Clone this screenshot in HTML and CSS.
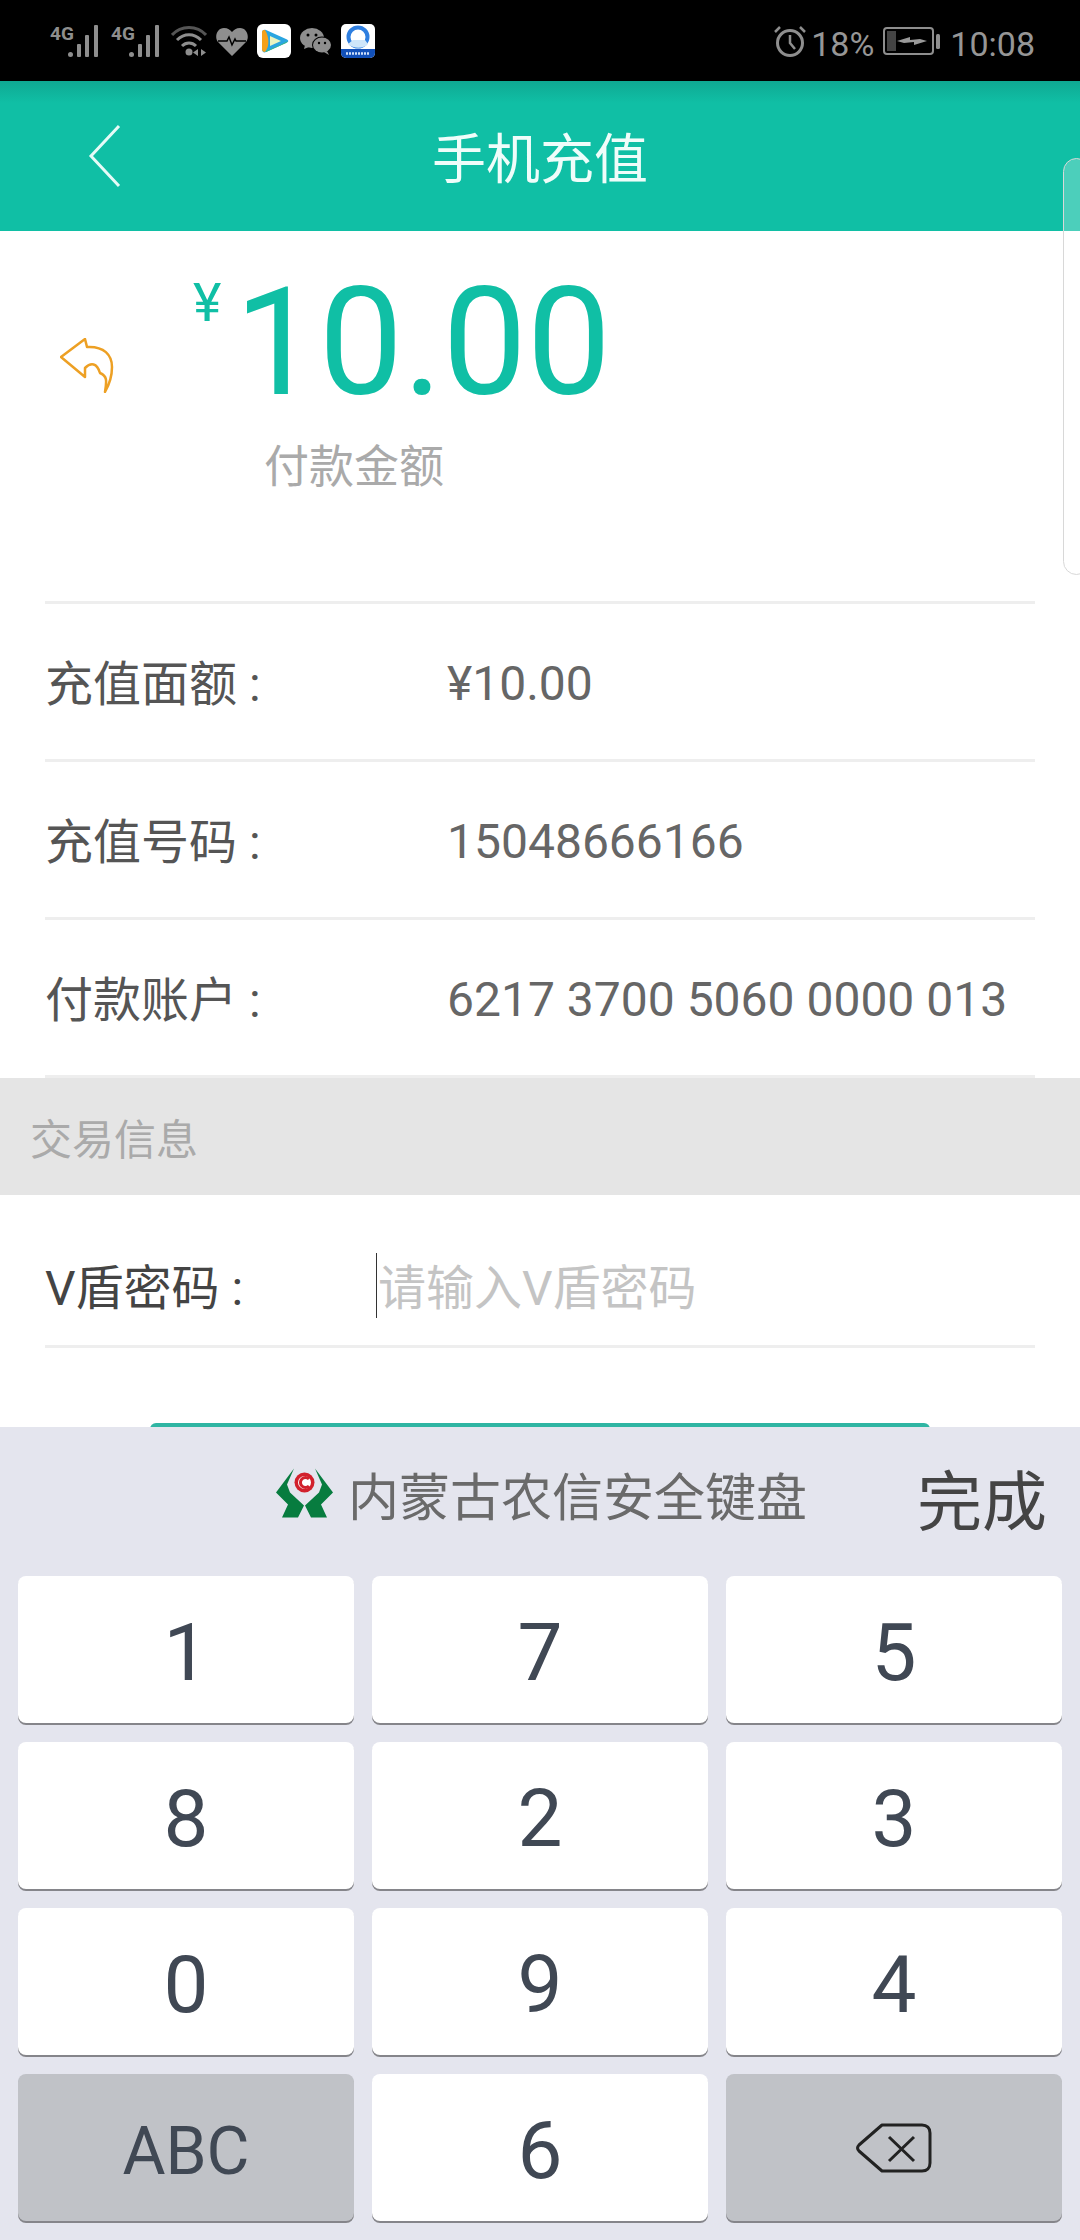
FILE: index.html
```html
<!DOCTYPE html>
<html lang="zh-CN">
<head>
    <meta charset="UTF-8">
    <meta name="viewport" content="width=device-width, initial-scale=1.0">
    <title>手机充值</title>
    <link rel="stylesheet" href="styles.css">
</head>
<body>

<div class="screen">
    <div class="status-bar">
        <div class="status-left">
            <span class="net">4G</span>
            <svg class="bars" viewBox="0 0 32 32"><g fill="#8e8e8e"><circle cx="2.5" cy="29.5" r="2.5"/><rect x="9" y="19" width="4" height="13" rx="1"/><rect x="17" y="10" width="4" height="22" rx="1"/><rect x="26" y="0" width="4" height="32" rx="1"/></g></svg>
            <span class="net net-2">4G</span>
            <svg class="bars" viewBox="0 0 32 32"><g fill="#8e8e8e"><circle cx="2.5" cy="29.5" r="2.5"/><rect x="9" y="19" width="4" height="13" rx="1"/><rect x="17" y="10" width="4" height="22" rx="1"/><rect x="26" y="0" width="4" height="32" rx="1"/></g></svg>
            <svg class="wifi" viewBox="0 0 36 30"><g fill="none" stroke-width="3"><path d="M1 9C10 -1 26 -1 35 9" stroke="#555"/><path d="M6 14C13 7 23 7 30 14" stroke="#8e8e8e"/><path d="M11 20C15 16 21 16 25 20" stroke="#8e8e8e"/></g><circle cx="18" cy="26" r="3.5" fill="#8e8e8e"/><path d="M27 23v7l-5-3.500zM30 23l5 3.500-5 3.500z" fill="#8e8e8e"/></svg>
            <svg class="heart" viewBox="0 0 32 28"><path d="M16 28L2 14C-2 9 1 0 8 0c4 0 6 2 8 4 2-2 4-4 8-4 7 0 10 9 6 14z" fill="#8e8e8e"/><path d="M2 13h9l2-4 3 8 3-6 1 2h10" fill="none" stroke="#000" stroke-width="1.500"/></svg>
            <svg class="tile" viewBox="0 0 34 34"><rect width="34" height="34" rx="6" fill="#fff"/><path d="M5 9C5 6 7 5 9 6L29 15C32 16 32 18 29 19L9 28C7 29 5 28 5 25z" fill="#2aa5e0"/><path d="M5 9C5 6 6 6 8 6C12 12 13 22 8 28C6 28 5 27 5 25z" fill="#f6a01a"/><path d="M9 27C14 25 24 21 31 17L29 19 9 28z" fill="#3dbb6c"/><path d="M13 12L24 17 13 22z" fill="#eaf4c0"/></svg>
            <svg class="wechat" viewBox="0 0 32 28"><ellipse cx="12" cy="10" rx="12" ry="10" fill="#8e8e8e"/><ellipse cx="22" cy="17" rx="10" ry="8.500" fill="#000"/><ellipse cx="22" cy="17" rx="9" ry="7.500" fill="#8e8e8e"/><path d="M27 23l2 4-5-3zM5 17l-1 4 5-2z" fill="#8e8e8e"/><circle cx="8" cy="7" r="1.500" fill="#000"/><circle cx="16" cy="7" r="1.500" fill="#000"/><circle cx="19" cy="15" r="1.200" fill="#000"/><circle cx="25" cy="15" r="1.200" fill="#000"/></svg>
            <svg class="tile" viewBox="0 0 34 34"><rect width="34" height="34" rx="5" fill="#fff"/><path d="M0 25h34v4a5 5 0 0 1-5 5H5a5 5 0 0 1-5-5z" fill="#1250b8"/><circle cx="17" cy="13" r="9.500" fill="none" stroke="#2f7fe0" stroke-width="4"/><path d="M7 20C12 25 23 25 27 20L24 16H12z" fill="#cfe6fa"/><path d="M5 29.500h24" stroke="#cfe0fa" stroke-width="2.500" stroke-dasharray="2 1"/></svg>
        </div>
        <div class="status-right">
            <svg class="alarm" viewBox="0 0 32 32"><circle cx="16" cy="18" r="12.500" fill="none" stroke="#8e8e8e" stroke-width="3"/><path d="M16 10v8l5 6" fill="none" stroke="#8e8e8e" stroke-width="2.500"/><path d="M1 7L6 2M31 7L26 2" stroke="#8e8e8e" stroke-width="2.500"/></svg>
            <span class="pct">18%</span>
            <svg class="battery" viewBox="0 0 57 28"><rect x="1" y="1" width="49" height="26" rx="3" fill="none" stroke="#8e8e8e" stroke-width="2"/><rect x="4" y="4" width="9" height="20" fill="#444"/><path d="M14 14l13-4v3l10-1 7 2-13 4v-3l-10 1z" fill="#999"/><rect x="53" y="7" width="4" height="15" rx="1.500" fill="#8e8e8e"/></svg>
            <span class="clock">10:08</span>
        </div>
    </div>

    <div class="nav-bar">
        <svg class="nav-back" viewBox="0 0 34 64"><path d="M31 2L3 32l28 30" fill="none" stroke="#e6fbf7" stroke-width="3"/></svg>
        <h1 class="nav-title">手机充值</h1>
    </div>

    <div class="hero">
        <svg class="undo-icon" viewBox="0 0 54 55"><path d="M1 19L25 1 27 9C44 8 52 17 52 29 52 38 49 47 45 54 47 42 47 38 40 35 37 25 31 24 25 30L25 39z" fill="none" stroke="#eda024" stroke-width="2.500" stroke-linejoin="round"/></svg>
        <div class="amount-box">
            <div class="amount-line">
                <span class="yen">¥</span>
                <span class="amount">10.00</span>
            </div>
            <div class="amount-label">付款金额</div>
        </div>
    </div>

    <div class="info-list">
        <div class="info-row">
            <span class="info-name">充值面额 :</span>
            <span class="info-value">¥10.00</span>
        </div>
        <div class="info-row">
            <span class="info-name">充值号码 :</span>
            <span class="info-value">15048666166</span>
        </div>
        <div class="info-row">
            <span class="info-name">付款账户 :</span>
            <span class="info-value">6217 3700 5060 0000 013</span>
        </div>
    </div>

    <div class="section-title">交易信息</div>

    <div class="input-row">
        <span class="input-name">V盾密码 :</span>
        <span class="caret"></span>
        <span class="placeholder">请输入V盾密码</span>
    </div>

    <div class="submit-btn"></div>

    <div class="side-sheet"></div>

    <div class="keyboard">
        <div class="kb-top">
            <div class="kb-brand">
                <svg class="kb-logo" viewBox="0 0 57 52">
                    <path d="M18 1L0 25 12 37 6 50H22L28 38 14 25 11 17z" fill="#077c3f"/>
                    <path d="M39 1L57 25 45 37 51 50H35L29 38 43 25 46 17z" fill="#077c3f"/>
                    <circle cx="28.500" cy="15" r="10" fill="#d2202c"/>
                    <circle cx="28.500" cy="15" r="6.500" fill="#fff"/>
                    <path d="M33 11.500A5 5 0 1 0 33 18.500" fill="none" stroke="#d2202c" stroke-width="3"/>
                </svg>
                <span class="kb-name">内蒙古农信安全键盘</span>
            </div>
            <span class="kb-done">完成</span>
        </div>
        <div class="kb-grid">
            <div class="key">1</div>
            <div class="key">7</div>
            <div class="key">5</div>
            <div class="key">8</div>
            <div class="key">2</div>
            <div class="key">3</div>
            <div class="key">0</div>
            <div class="key">9</div>
            <div class="key">4</div>
            <div class="key key-fn key-abc">ABC</div>
            <div class="key">6</div>
            <div class="key key-fn">
                <svg class="del-icon" viewBox="0 0 76 50"><path d="M26 2H66C71 2 74 5 74 10V40C74 45 71 48 66 48H26L3 28C1 26 1 24 3 22z" fill="none" stroke="#222" stroke-width="3" stroke-linejoin="round"/><path d="M33 14L58 38M58 14L33 38" stroke="#222" stroke-width="3"/></svg>
            </div>
        </div>
    </div>
</div>

</body>
</html>
```

FILE: styles.css
```css
* {
    box-sizing: border-box;
}
html, body {
    margin: 0;
    padding: 0;
}
body {
    font-family: 'Roboto', 'Noto Sans CJK SC', sans-serif;
    background: #fff;
}
.screen {
    position: relative;
    width: 1080px;
    height: 2240px;
    overflow: hidden;
    background: #fff;
}

/* status bar */
.status-bar {
    height: 81px;
    background: #000;
    display: flex;
    justify-content: space-between;
    align-items: flex-start;
    padding: 24px 45px 0 50px;
    color: #969696;
}
.status-left, .status-right {
    display: flex;
    align-items: flex-start;
}
.net {
    width: 18px;
    font-family: 'Liberation Sans Narrow', 'Roboto', sans-serif;
    font-size: 19px;
    font-weight: bold;
    line-height: 19px;
    color: #8e8e8e;
}
.net-2 {
    margin-left: 11px;
}
.bars {
    width: 32px;
    height: 32px;
    margin-top: 1px;
}
.wifi {
    width: 36px;
    height: 30px;
    margin: 2px 0 0 10px;
}
.heart {
    width: 32px;
    height: 28px;
    margin: 4px 0 0 9px;
}
.tile {
    width: 34px;
    height: 34px;
    margin-left: 9px;
}
.wechat {
    width: 32px;
    height: 28px;
    margin: 4px 0 0 9px;
}
.alarm {
    width: 32px;
    height: 32px;
    margin-top: 1px;
}
.pct, .clock {
    font-size: 34px;
    line-height: 36px;
    margin-top: 2px;
}
.pct {
    margin-left: 5px;
}
.battery {
    width: 57px;
    height: 28px;
    margin: 3px 0 0 9px;
}
.clock {
    margin-left: 10px;
}

/* nav */
.nav-bar {
    position: relative;
    height: 150px;
    padding-bottom: 2px;
    display: flex;
    align-items: center;
    justify-content: center;
    background: linear-gradient(#0fa993 0, #10bfa5 22px);
}
.nav-back {
    position: absolute;
    left: 88px;
    top: 43px;
    width: 34px;
    height: 64px;
}
.nav-title {
    margin: 0;
    font-size: 54px;
    font-weight: normal;
    color: #effdfa;
}
.side-sheet {
    position: absolute;
    right: -10px;
    top: 158px;
    width: 27px;
    height: 417px;
    border: 1px solid #d8d8d8;
    border-radius: 14px;
    background: rgba(255, 255, 255, 0.25);
}

/* amount */
.hero {
    height: 373px;
    margin: 0 45px;
    padding-left: 15px;
    display: flex;
    align-items: flex-start;
    border-bottom: 3px solid #eee;
}
.undo-icon {
    width: 54px;
    height: 55px;
    margin-top: 107px;
}
.amount-box {
    margin-left: 79px;
}
.amount-line {
    display: flex;
    align-items: flex-start;
}
.yen {
    font-size: 54px;
    line-height: 54px;
    margin-top: 45px;
    color: #10bfa5;
}
.amount {
    font-size: 150px;
    line-height: 183px;
    margin: 21px 0 0 13px;
    color: #10bfa5;
}
.amount-label {
    margin: 3px 0 0 71px;
    font-size: 45px;
    line-height: 60px;
    color: #aaa;
}

/* rows */
.info-list {
    margin: 0 45px;
}
.info-row {
    height: 158px;
    display: flex;
    align-items: center;
    border-bottom: 3px solid #eee;
}
.info-name {
    width: 402px;
    margin-bottom: 3px;
    font-size: 48px;
    color: #555;
}
.info-value {
    margin-top: 3px;
    font-size: 48px;
    color: #666;
}
.section-title {
    height: 117px;
    padding-left: 30px;
    display: flex;
    align-items: center;
    font-size: 42px;
    color: #aaa;
    background: #e5e5e5;
}
.input-row {
    height: 153px;
    margin: 0 45px;
    padding-top: 30px;
    display: flex;
    align-items: center;
    border-bottom: 3px solid #eee;
}
.input-name {
    width: 331px;
    margin-bottom: 3px;
    font-size: 48px;
    color: #444;
}
.caret {
    width: 1px;
    height: 65px;
    background: #333;
}
.placeholder {
    margin-left: 1px;
    margin-bottom: 3px;
    font-size: 48px;
    color: #c4c4c4;
}
.submit-btn {
    height: 120px;
    margin: 75px 150px 0;
    border-radius: 6px;
    background: #2fb5a3;
}

/* keyboard */
.keyboard {
    position: absolute;
    left: 0;
    right: 0;
    bottom: 0;
    height: 813px;
    padding: 0 18px;
    background: #e4e5ee;
}
.kb-top {
    height: 149px;
    padding-bottom: 16px;
    display: flex;
    align-items: center;
    justify-content: space-between;
}
.kb-brand {
    display: flex;
    align-items: center;
    margin-left: 258px;
}
.kb-logo {
    width: 57px;
    height: 55px;
}
.kb-name {
    margin-left: 15px;
    font-size: 51px;
    color: #6a6a6a;
}
.kb-done {
    font-size: 65px;
    color: #444;
    margin-right: 15px;
    margin-top: 6px;
}
.kb-grid {
    display: grid;
    grid-template-columns: repeat(3, 336px);
    grid-auto-rows: 147px;
    column-gap: 18px;
    row-gap: 19px;
}
.key {
    display: flex;
    align-items: center;
    justify-content: center;
    padding-top: 7px;
    background: #fff;
    border-radius: 8px;
    box-shadow: 0 2px 0 #85858a;
    font-size: 80px;
    color: #404854;
}
.key-fn {
    background: #c0c2c7;
}
.key-abc {
    font-size: 66px;
}
.del-icon {
    width: 76px;
    height: 50px;
    margin-top: -7px;
}
```
